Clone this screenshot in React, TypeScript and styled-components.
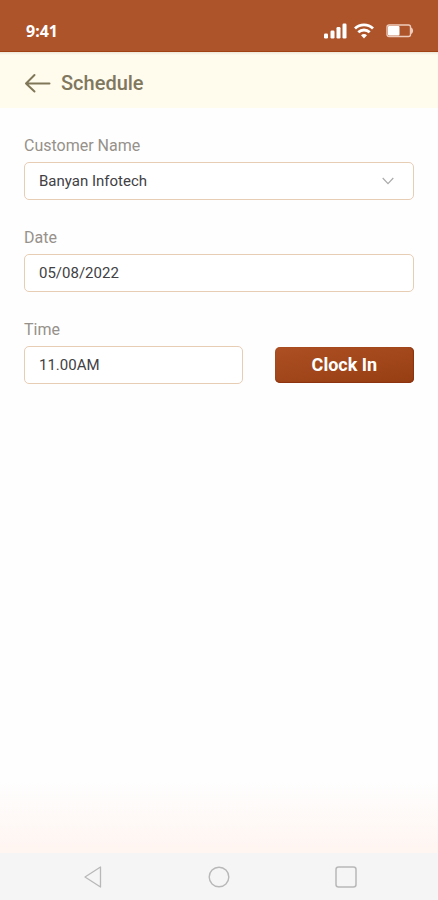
import React, { useState } from "react";
import styled, { createGlobalStyle } from "styled-components";

const GlobalStyle = createGlobalStyle`
  *, *::before, *::after { box-sizing: border-box; }
  body { margin: 0; font-family: Roboto, "Liberation Sans", sans-serif; }
`;

const Screen = styled.div`
  display: flex;
  flex-direction: column;
  min-height: 100vh;
  background: #fefefe;
`;

const StatusBar = styled.div`
  display: flex;
  align-items: center;
  justify-content: space-between;
  height: 52px;
  padding: 10px 24px 0 26px;
  background: #ad542b;
  border-bottom: 1px solid #a14213;
  color: #fff;
`;

const Clock = styled.time`
  font: 700 16px/20px "Noto Sans", sans-serif;
`;

const StatusIcons = styled.div`
  display: flex;
  align-items: center;
  gap: 6px;
`;

const BatterySlot = styled.span`
  display: flex;
  margin-left: 6px;
`;

const Header = styled.header`
  display: flex;
  align-items: center;
  gap: 10px;
  height: 56px;
  padding: 6px 24px 0;
  background: linear-gradient(#ece6d8, #fffbed 3px);
`;

const BackButton = styled.button`
  display: flex;
  padding: 0;
  border: 0;
  background: none;
  color: #807758;
  cursor: pointer;
`;

const Title = styled.h1`
  margin: 0;
  color: #7f785f;
  font-size: 20px;
  font-weight: 500;
  line-height: 24px;
`;

const Form = styled.form`
  display: flex;
  flex: 1;
  flex-direction: column;
  gap: 28px;
  padding: 28px 24px;
  background: linear-gradient(to top, #fff5f1, #fefefe 72px);
`;

const Field = styled.div`
  display: flex;
  flex-direction: column;
  gap: 6px;
`;

const Label = styled.label`
  color: #96918a;
  font-size: 16px;
  line-height: 20px;
`;

const TimeRow = styled.div`
  display: grid;
  grid-template-columns: 11fr 7fr;
  gap: 32px;
  align-items: end;
`;

const control = `
  width: 100%;
  height: 38px;
  padding: 0 14px;
  border: 1px solid #e8cdb5;
  border-radius: 5px;
  background: #fff;
  color: #414144;
  font-family: inherit;
  font-size: 15px;
`;

const TextInput = styled.input`
  ${control}
  min-width: 0;
`;

const SelectBox = styled.div`
  display: grid;
  align-items: center;

  > * { grid-area: 1 / 1; }
  > svg {
    justify-self: end;
    margin-right: 20px;
    pointer-events: none;
  }
`;

const Select = styled.select`
  ${control}
  appearance: none;
`;

const ClockInButton = styled.button`
  height: 36px;
  margin-bottom: 1px;
  padding: 0;
  border: 0;
  border-radius: 5px;
  background: linear-gradient(170deg, #ad5023, #963e13);
  box-shadow: inset 0 -1px 1px #8d3210, inset -1px 0 1px #8d3210;
  color: #fff;
  font: 700 18px/24px Roboto, sans-serif;
  cursor: pointer;
`;

const NavBar = styled.nav`
  display: flex;
  align-items: center;
  justify-content: space-between;
  height: 47px;
  padding: 0 80px;
  background: #f5f5f5;
`;

const NavButton = styled.button`
  display: flex;
  padding: 0;
  border: 0;
  background: none;
  color: #b8b8b8;
  cursor: pointer;
`;

const SignalIcon = () => (
  <svg width="24" height="16" viewBox="0 0 24 16" fill="#fff" aria-hidden="true">
    <rect x="0" y="10.5" width="4" height="5" rx="1.2" />
    <rect x="6.5" y="7.500" width="4" height="8" rx="1.2" />
    <rect x="12.5" y="4" width="4" height="11.5" rx="1.2" />
    <rect x="18.5" y="0.5" width="4" height="15" rx="1.2" />
  </svg>
);

const WifiIcon = () => (
  <svg width="20" height="16" viewBox="0 0 20 16" fill="none" stroke="#fff" strokeWidth="2.8" aria-hidden="true">
    <path d="M1 5.6C6 .7 14 .7 19 5.6" />
    <path d="M4.3 9.3c3.2-3.1 8.2-3.1 11.4 0" />
    <path d="M7 12.3c1.7-1.6 4.3-1.6 6 0L10 15.5z" fill="#fff" stroke="none" />
  </svg>
);

const BatteryIcon = () => (
  <svg width="28" height="14" viewBox="0 0 28 14" aria-hidden="true">
    <rect x="1" y="1" width="23.5" height="11.5" rx="2" fill="none" stroke="#efcbbb" strokeWidth="1.4" />
    <rect x="2" y="2" width="11.5" height="9.5" rx="1" fill="#fff" />
    <path d="M25 3.5c2.8 1 2.8 5.5 0 6.500z" fill="#efcbbb" />
  </svg>
);

const BackIcon = () => (
  <svg width="27" height="20" viewBox="0 0 27 20" fill="none" stroke="currentColor" strokeWidth="2" strokeLinecap="round" strokeLinejoin="round" aria-hidden="true">
    <path d="M10.5 2 2 10.5l8.5 8M2 10.5h23.5" />
  </svg>
);

const ChevronIcon = () => (
  <svg width="12" height="8" viewBox="0 0 12 8" fill="none" stroke="#ababab" strokeWidth="1.2" aria-hidden="true">
    <path d="m.7 1 5.3 5.7L11.3 1" />
  </svg>
);

export default function App() {
  const [customer, setCustomer] = useState("Banyan Infotech");
  const [date, setDate] = useState("05/08/2022");
  const [time, setTime] = useState("11.00AM");

  return (
    <Screen>
      <GlobalStyle />
      <StatusBar>
        <Clock>9:41</Clock>
        <StatusIcons>
          <SignalIcon />
          <WifiIcon />
          <BatterySlot><BatteryIcon /></BatterySlot>
        </StatusIcons>
      </StatusBar>
      <Header>
        <BackButton type="button" aria-label="Back"><BackIcon /></BackButton>
        <Title>Schedule</Title>
      </Header>
      <Form onSubmit={(event) => event.preventDefault()}>
        <Field>
          <Label htmlFor="customer">Customer Name</Label>
          <SelectBox>
            <Select id="customer" value={customer} onChange={(e) => setCustomer(e.target.value)}>
              <option>Banyan Infotech</option>
            </Select>
            <ChevronIcon />
          </SelectBox>
        </Field>
        <Field>
          <Label htmlFor="date">Date</Label>
          <TextInput id="date" value={date} onChange={(e) => setDate(e.target.value)} />
        </Field>
        <TimeRow>
          <Field>
            <Label htmlFor="time">Time</Label>
            <TextInput id="time" value={time} onChange={(e) => setTime(e.target.value)} />
          </Field>
          <ClockInButton type="submit">Clock In</ClockInButton>
        </TimeRow>
      </Form>
      <NavBar>
        <NavButton type="button" aria-label="Back">
          <svg width="24" height="24" viewBox="0 0 24 24" fill="none" stroke="currentColor" strokeWidth="1.3" strokeLinejoin="round">
            <path d="M20.5 2v20L5 12z" />
          </svg>
        </NavButton>
        <NavButton type="button" aria-label="Home">
          <svg width="24" height="24" viewBox="0 0 24 24" fill="none" stroke="currentColor" strokeWidth="1.4">
            <circle cx="12" cy="12" r="9.8" />
          </svg>
        </NavButton>
        <NavButton type="button" aria-label="Recent apps">
          <svg width="24" height="24" viewBox="0 0 24 24" fill="none" stroke="currentColor" strokeWidth="1.5">
            <rect x="2" y="2" width="20" height="20" rx="2.5" />
          </svg>
        </NavButton>
      </NavBar>
    </Screen>
  );
}
